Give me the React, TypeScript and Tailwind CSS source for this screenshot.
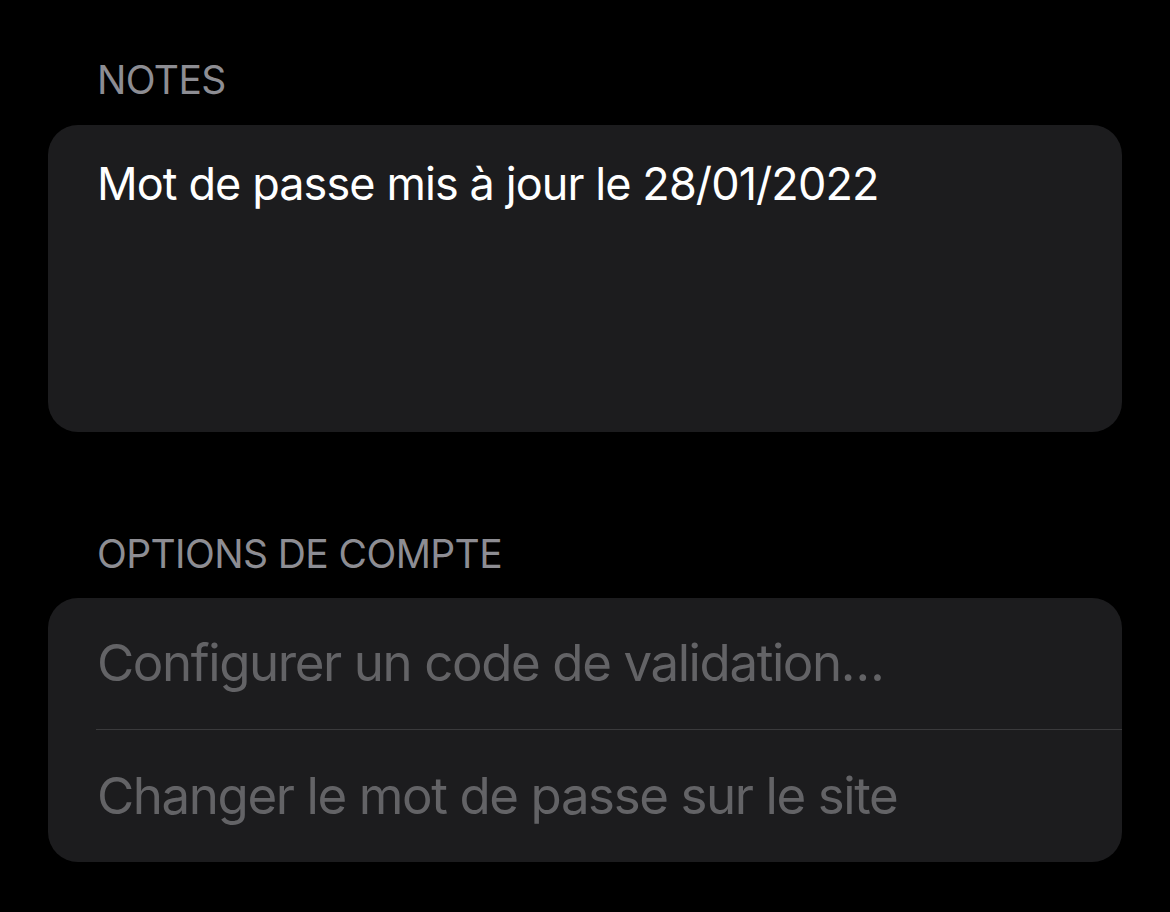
export default function App() {
    return (
        <div
            className="min-h-[912px] bg-black px-[48px] pt-[57px]"
            style={{ fontFamily: 'Inter, "Noto Sans", sans-serif' }}
        >
            {/* Notes section */}
            <div className="h-[46px] pl-[49px] text-[39px] leading-[46px] tracking-[-0.6px] text-[#8d8d93]">NOTES</div>
            <div className="mt-[22px] h-[307px] rounded-[30px] bg-[#1c1c1e] px-[49px] pt-[32px]">
                <p className="text-[45px] leading-[54px] tracking-[-0.9px] text-white">
                    Mot de passe mis à jour le 28/01/2022
                </p>
            </div>

            {/* Account options */}
            <div className="mt-[99px] h-[46px] pl-[49px] text-[39px] leading-[46px] tracking-[-0.6px] text-[#8d8d93]">
                OPTIONS DE COMPTE
            </div>
            <div className="mt-[21px] overflow-hidden rounded-[30px] bg-[#1c1c1e]">
                <div className="flex h-[131px] items-center pl-[49px] text-[51px] tracking-[-1.4px] text-[#636366]">
                    Configurer un code de validation…
                </div>
                <div className="ml-[48px] h-px bg-[#3a3a3c]" />
                <div className="flex h-[132px] items-center pl-[49px] text-[51px] tracking-[-1.4px] text-[#636366]">
                    Changer le mot de passe sur le site
                </div>
            </div>
        </div>
    );
}
